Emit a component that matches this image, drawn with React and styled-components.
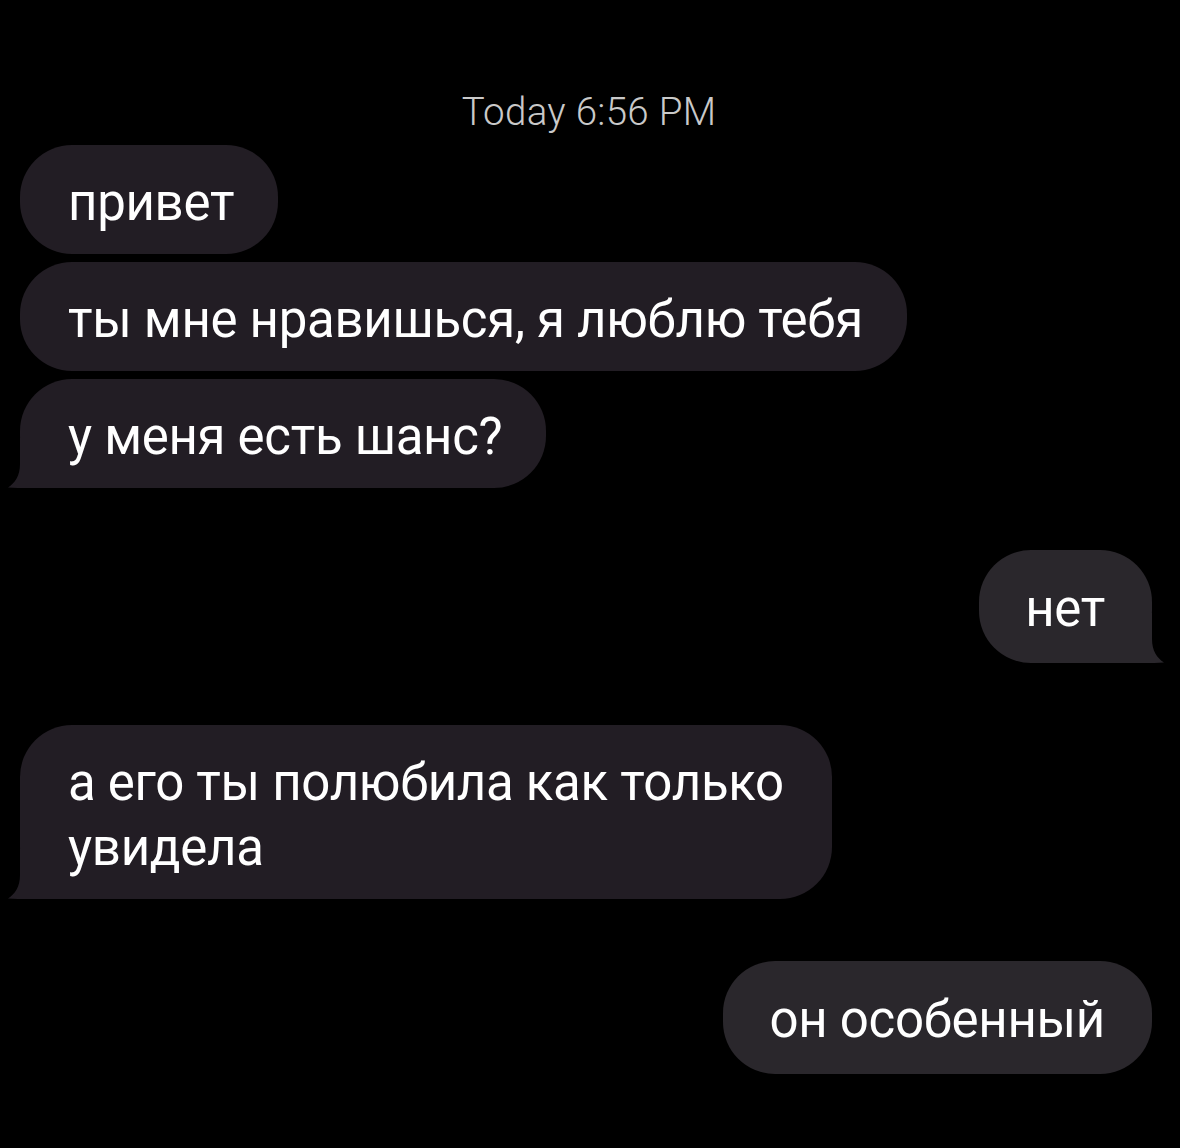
import styled, { createGlobalStyle } from 'styled-components';

const GlobalStyle = createGlobalStyle`
  html, body {
    margin: 0;
    padding: 0;
    background: #000;
  }
  body {
    font-family: Roboto, "Liberation Sans", "Noto Sans", sans-serif;
    -webkit-font-smoothing: antialiased;
  }
`;

const Thread = styled.div`
  width: 1180px;
  height: 1148px;
  box-sizing: border-box;
  background: #000;
  padding: 90px 28px 0 20px;
  display: flex;
  flex-direction: column;
  overflow: hidden;
`;

const Stamp = styled.div`
  align-self: center;
  margin-left: 6px;
  color: #c9c9c9;
  font-size: 38.5px;
  font-weight: 300;
  letter-spacing: 0.3px;
  line-height: 44px;
  margin-bottom: 11px;
`;

const Group = styled.div`
  display: flex;
  flex-direction: column;
  align-items: ${p => (p.$mine ? 'flex-end' : 'flex-start')};
  gap: 8px;
  margin-bottom: ${p => p.$after || 0}px;
`;

const Bubble = styled.div`
  position: relative;
  box-sizing: border-box;
  background: ${p => (p.$mine ? '#2a272c' : '#221d24')};
  color: #fff;
  font-size: 51px;
  line-height: 65px;
  letter-spacing: -0.3px;
  border-radius: 52px;
  padding: ${p => (p.$mine ? '26px 47px 22px 46px' : '25px 44px 19px 48px')};
  width: ${p => (p.$width ? `${p.$width}px` : 'auto')};
  min-width: ${p => p.$minWidth || 0}px;
  text-align: ${p => (p.$mine ? 'center' : 'left')};
`;

const Text = styled.span`
  position: relative;
`;

// little curl at the bottom corner of the last bubble in a run
const TailSvg = styled.svg`
  position: absolute;
  bottom: 0;
  width: 64px;
  height: 50px;
  ${p => (p.$mine ? 'right: -12px; transform: scaleX(-1);' : 'left: -12px;')}
`;

const Tail = ({ mine, color }) => (
  <TailSvg $mine={mine} viewBox="0 0 64 50">
    <path
      d="M12 0 H64 V50 H20 C14 50 6 50 0 49.5 C7 45 12 38 12 26 Z"
      fill={color}
    />
  </TailSvg>
);

const messages = [
  {
    mine: false,
    after: 62,
    items: [
      { text: 'привет' },
      { text: 'ты мне нравишься, я люблю тебя' },
      { text: 'у меня есть шанс?', tail: true },
    ],
  },
  { mine: true, after: 62, items: [{ text: 'нет', tail: true, minWidth: 172 }] },
  {
    mine: false,
    after: 62,
    items: [{ text: 'а его ты полюбила как только увидела', tail: true, width: 812 }],
  },
  { mine: true, after: 0, items: [{ text: 'он особенный' }] },
];

export default function App() {
  return (
    <>
      <GlobalStyle />
      <Thread>
        <Stamp>Today 6:56 PM</Stamp>
        {messages.map((group, i) => (
          <Group key={i} $mine={group.mine} $after={group.after}>
            {group.items.map((m, j) => (
              <Bubble
                key={j}
                $mine={group.mine}
                $width={m.width}
                $minWidth={m.minWidth}
              >
                {m.tail && <Tail mine={group.mine} color={group.mine ? '#2a272c' : '#221d24'} />}
                <Text>{m.text}</Text>
              </Bubble>
            ))}
          </Group>
        ))}
      </Thread>
    </>
  );
}
